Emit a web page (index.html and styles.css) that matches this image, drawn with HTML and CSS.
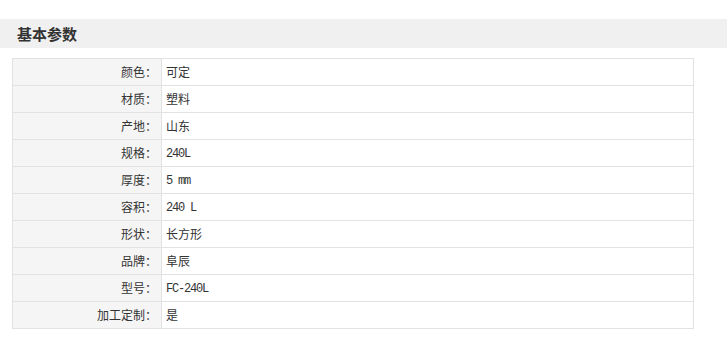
FILE: index.html
```html
<!DOCTYPE html>
<html lang="zh-CN">
<head>
<meta charset="utf-8">
<title>基本参数</title>
<link rel="stylesheet" href="styles.css">
</head>
<body>
<div class="section">
  <h2 class="section-title">基本参数</h2>
  <table class="params">
    <tbody>
      <tr><th>颜色：</th><td>可定</td></tr>
      <tr><th>材质：</th><td>塑料</td></tr>
      <tr><th>产地：</th><td>山东</td></tr>
      <tr><th>规格：</th><td><span class="latin">240L</span></td></tr>
      <tr><th>厚度：</th><td><span class="latin">5 mm</span></td></tr>
      <tr><th>容积：</th><td><span class="latin">240 L</span></td></tr>
      <tr><th>形状：</th><td>长方形</td></tr>
      <tr><th>品牌：</th><td>阜辰</td></tr>
      <tr><th>型号：</th><td><span class="latin">FC-240L</span></td></tr>
      <tr><th>加工定制：</th><td>是</td></tr>
    </tbody>
  </table>
</div>
</body>
</html>
```
FILE: styles.css
```css
html, body {
  margin: 0;
  padding: 0;
  background: #ffffff;
}
body {
  font-family: "Noto Sans CJK SC", "Liberation Sans", sans-serif;
  font-size: 12px;
  color: #333333;
}
.section {
  padding-top: 19px;
}
.section-title {
  margin: 0;
  height: 29px;
  line-height: 29px;
  background: #f0f0f0;
  padding-left: 17px;
  font-size: 15px;
  font-weight: bold;
  color: #333333;
}
.params {
  margin: 10px 0 0 12px;
  width: 682px;
  border-collapse: collapse;
  border: 1px solid #e2e2e2;
}
.params th,
.params td {
  border: 1px solid #e2e2e2;
  height: 26px;
  padding: 0;
  font-size: 12px;
  line-height: 16px;
  font-weight: normal;
  color: #333333;
  vertical-align: middle;
}
.params th {
  width: 144px;
  text-align: right;
  padding-right: 4px;
  background: #f5f5f5;
}
.params td {
  text-align: left;
  padding-left: 4px;
  background: #ffffff;
}
.latin {
  font-family: "Liberation Mono", "DejaVu Sans Mono", monospace;
  letter-spacing: -1.2px;
}
```
